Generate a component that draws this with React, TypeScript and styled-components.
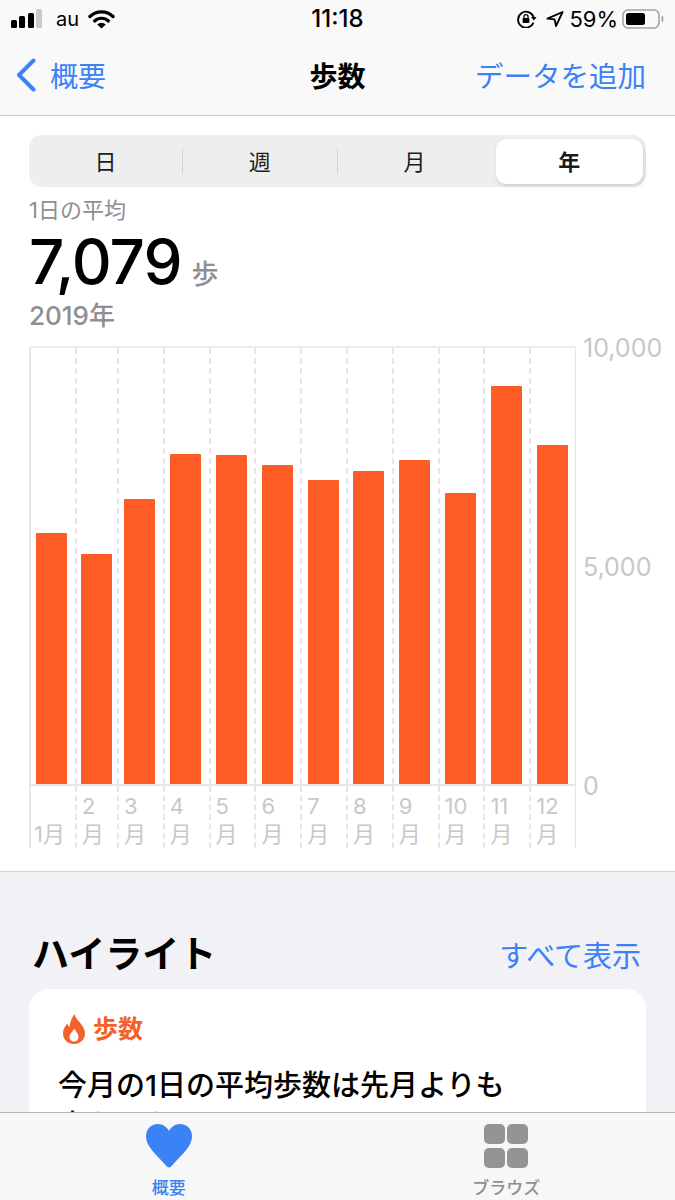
import * as React from "react";
import styled, { createGlobalStyle } from "styled-components";

const SANS = `"Inter", "Noto Sans CJK JP", "Liberation Sans", sans-serif`;
const BLUE = "#3b82f6";
const ORANGE = "#fe5c26";
const CHART_COLUMNS = "46px 42px repeat(10, 1fr)";

const GlobalStyle = createGlobalStyle`
	html, body {
		margin: 0;
		padding: 0;
		background: #fff;
	}
	* {
		box-sizing: border-box;
	}
`;

const Page = styled.div`
	width: 675px;
	height: 1200px;
	display: flex;
	flex-direction: column;
	overflow: hidden;
	font-family: ${SANS};
	color: #000;
`;

const Header = styled.header`
	flex: none;
	height: 116px;
	background: #f9f9f9;
	border-bottom: 1px solid #c6c6c8;
`;

const StatusBar = styled.div`
	height: 38px;
	display: grid;
	grid-template-columns: 1fr auto 1fr;
	align-items: center;
	padding: 0 11px;
`;

const StatusLeft = styled.div`
	display: flex;
	align-items: center;
`;

const StatusRight = styled.div`
	display: flex;
	align-items: center;
	justify-content: flex-end;
	gap: 9px;
`;

const Carrier = styled.span`
	font-size: 20px;
	margin: 0 9px 0 14px;
	line-height: 24px;
`;

const Clock = styled.span`
	font-size: 24px;
	font-weight: 500;
	line-height: 24px;
`;

const Percent = styled.span`
	font-size: 22px;
	line-height: 24px;
	margin: 0 -5px 0 -4px;
`;

const NavBar = styled.nav`
	height: 73px;
	display: grid;
	grid-template-columns: 1fr auto 1fr;
	align-items: center;
	padding: 0 16px;
`;

const BackLink = styled.div`
	display: flex;
	align-items: center;
	gap: 14px;
	font-size: 28px;
	color: ${BLUE};
`;

const NavTitle = styled.div`
	font-size: 28px;
	font-weight: 700;
`;

const NavAction = styled.div`
	font-size: 28.5px;
	color: ${BLUE};
	text-align: right;
	padding-right: 13px;
	white-space: nowrap;
`;

const Main = styled.main`
	flex: 1;
	min-height: 0;
	overflow: hidden;
	background: #f1f1f6;
`;

const ChartPanel = styled.section`
	background: #fff;
	border-bottom: 1px solid #d1d1d6;
	padding: 19px 0 23px 29px;
`;

const Segments = styled.div`
	height: 52px;
	width: 617px;
	border-radius: 13px;
	background: #eeeeef;
	display: grid;
	grid-template-columns: repeat(4, 1fr);
	align-items: center;
`;

const Segment = styled.div<{ $selected?: boolean; $divider?: boolean }>`
	height: ${(p) => (p.$selected ? "45px" : "26px")};
	margin: ${(p) => (p.$selected ? "0 3px 0 4px" : "0")};
	padding-bottom: 3px;
	display: flex;
	align-items: center;
	justify-content: center;
	font-size: 22px;
	font-weight: ${(p) => (p.$selected ? 700 : 400)};
	color: #1c1c1e;
	background: ${(p) => (p.$selected ? "#fff" : "transparent")};
	border-radius: ${(p) => (p.$selected ? "11px" : "0")};
	border-right: ${(p) => (p.$divider ? "1px solid #d4d4d6" : "none")};
	box-shadow: ${(p) => (p.$selected ? "1px 2px 4px rgba(0, 0, 0, 0.14)" : "none")};
`;

const Summary = styled.div`
	padding-top: 9px;
	margin-bottom: 14px;
`;

const SummaryLabel = styled.div`
	font-size: 22px;
	line-height: 28px;
	font-weight: 400;
	color: #8e8e93;
`;

const SummaryValue = styled.div`
	display: flex;
	align-items: baseline;
	height: 76px;
`;

const BigNumber = styled.span`
	font-size: 62px;
	line-height: 76px;
	font-weight: 500;
	letter-spacing: -1px;
`;

const Unit = styled.span`
	margin-left: 10px;
	font-size: 27px;
	line-height: 40px;
	font-weight: 500;
	color: #8e8e93;
`;

const SummaryYear = styled.div`
	font-size: 26px;
	line-height: 32px;
	font-weight: 500;
	color: #8e8e93;
`;

const ChartRow = styled.div`
	display: flex;
	align-items: flex-start;
	gap: 7px;
`;

const ChartBody = styled.div`
	flex: none;
	width: 547px;
`;

const Plot = styled.div`
	height: 440px;
	display: grid;
	grid-template-columns: ${CHART_COLUMNS};
	border-top: 2px solid #ececee;
	border-bottom: 2px solid #e5e5ea;
	border-right: 1px solid #e5e5ea;
`;

const PlotCell = styled.div<{ $first?: boolean }>`
	display: flex;
	align-items: flex-end;
	justify-content: center;
	padding-right: ${(p) => (p.$first ? "3px" : "2px")};
	border-left: 2px ${(p) => (p.$first ? "solid" : "dashed")} #e6e6e8;
`;

const Bar = styled.div`
	width: 31px;
	background: ${ORANGE};
	border-radius: 1px 1px 0 0;
`;

const MonthRow = styled.div`
	height: 62px;
	display: grid;
	grid-template-columns: ${CHART_COLUMNS};
	border-right: 1px solid #e5e5ea;
`;

const MonthCell = styled.div<{ $first?: boolean }>`
	display: flex;
	flex-direction: column;
	justify-content: flex-end;
	padding-left: ${(p) => (p.$first ? "3px" : "5px")};
	border-left: 2px ${(p) => (p.$first ? "solid" : "dashed")} #e6e6e8;
	font-size: 22px;
	line-height: 28px;
	color: #c7c7cc;
	white-space: nowrap;
`;

const Axis = styled.div`
	flex: none;
	height: 462px;
	margin-top: -10px;
	display: flex;
	flex-direction: column;
	justify-content: space-between;
	font-size: 25px;
	line-height: 24px;
	color: #c7c7cc;
`;

const Highlights = styled.section`
	padding: 58px 29px 0;
`;

const HighlightHead = styled.div`
	display: flex;
	align-items: center;
	justify-content: space-between;
	height: 44px;
	padding: 0 5px 0 3px;
	margin-bottom: 15px;
`;

const HighlightTitle = styled.h2`
	margin: 0;
	font-size: 37px;
	font-weight: 700;
`;

const SeeAll = styled.span`
	margin-top: 4px;
	font-size: 29px;
	color: ${BLUE};
`;

const Card = styled.article`
	background: #fff;
	border-radius: 20px;
	padding: 24px 29px 40px;
	height: 240px;
`;

const CardTag = styled.div`
	display: flex;
	align-items: center;
	gap: 8px;
	padding-left: 5px;
	font-size: 25px;
	font-weight: 700;
	color: #f2612c;
	line-height: 32px;
`;

const CardText = styled.p`
	margin: 21px 0 0;
	font-size: 29px;
	font-weight: 500;
	line-height: 40px;
`;

const TabBar = styled.footer`
	flex: none;
	height: 88px;
	display: grid;
	grid-template-columns: 1fr 1fr;
	background: #f7f7f7;
	border-top: 1px solid #b5b5b8;
`;

const Tab = styled.div<{ $active?: boolean }>`
	display: flex;
	flex-direction: column;
	align-items: center;
	padding-top: 11px;
	font-size: 17px;
	font-weight: 500;
	line-height: 22px;
	color: ${(p) => (p.$active ? BLUE : "#8e8e93")};
`;

const TabIcon = styled.div`
	height: 46px;
	margin-bottom: 7px;
`;

const BROWSE_TILES = [
	[0, 0],
	[23, 0],
	[0, 24],
	[23, 24],
];

const MONTHS = [
	{ value: 251 },
	{ value: 230 },
	{ value: 285 },
	{ value: 330 },
	{ value: 329 },
	{ value: 319 },
	{ value: 304 },
	{ value: 313 },
	{ value: 324 },
	{ value: 291 },
	{ value: 398 },
	{ value: 339 },
];

const SignalIcon = () => (
	<svg width="31" height="20" viewBox="0 0 31 20">
		<rect x="0" y="11" width="6" height="8" rx="1.5" fill="#000" />
		<rect x="8" y="7" width="6" height="12" rx="1.5" fill="#000" />
		<rect x="17" y="4" width="6" height="15" rx="1.5" fill="#000" />
		<rect x="25" y="0" width="6" height="19" rx="1.5" fill="#c9c9c9" />
	</svg>
);

const WifiIcon = () => (
	<svg width="27" height="19" viewBox="0 0 27 19">
		<path d="M2 6.5 A16.5 16.5 0 0 1 25 6.5" fill="none" stroke="#000" strokeWidth="3.4" strokeLinecap="round" />
		<path d="M6.6 11 A10 10 0 0 1 20.4 11" fill="none" stroke="#000" strokeWidth="3.2" strokeLinecap="round" />
		<path d="M13.5 18.6 L9.2 14.4 A6.2 6.2 0 0 1 17.8 14.4 Z" fill="#000" />
	</svg>
);

const RotationLockIcon = () => (
	<svg width="20" height="18" viewBox="0 0 20 18">
		<path d="M16.5 12.6 A8 8 0 1 1 16.6 7" fill="none" stroke="#000" strokeWidth="1.8" />
		<path d="M14 7 L19.6 7 L16.8 10.4 Z" fill="#000" />
		<rect x="5.6" y="8" width="6.8" height="5" rx="1" fill="#000" />
		<path d="M7 8.4 V6.6 A2 2 0 0 1 11 6.6 V8.4" fill="none" stroke="#000" strokeWidth="1.3" />
	</svg>
);

const LocationIcon = () => (
	<svg width="18" height="16" viewBox="0 0 18 16">
		<path d="M16.6 1 L1.4 7.6 L8.6 8.4 L10 15 Z" fill="none" stroke="#000" strokeWidth="1.8" strokeLinejoin="round" />
	</svg>
);

const BatteryIcon = () => (
	<svg width="42" height="20" viewBox="0 0 42 20">
		<rect x="1" y="1" width="36" height="18" rx="5" fill="none" stroke="#a3a3a3" strokeWidth="1.6" />
		<rect x="4" y="4" width="19" height="12" rx="2.5" fill="#000" />
		<rect x="39.5" y="7" width="1.8" height="6" rx="0.9" fill="#a3a3a3" />
	</svg>
);

const ChevronIcon = () => (
	<svg width="20" height="34" viewBox="0 0 20 34">
		<path d="M17.5 2.5 L3 17 L17.5 31.5" fill="none" stroke={BLUE} strokeWidth="4" strokeLinecap="round" strokeLinejoin="round" />
	</svg>
);

const FlameIcon = () => (
	<svg width="22" height="30" viewBox="0 0 22 30">
		<path
			fillRule="evenodd"
			fill="#f2612c"
			d="M11.500 0 C12 5.500 22 11 22 19.500 C22 25.600 17.200 30 11 30 C4.800 30 0 25.600 0 19.500 C0 15.500 2 12.300 4.200 9.800 C4.800 11.200 5.500 12.300 6.500 13 C7 8.500 8.800 3.800 11.500 0 Z M11 27.500 C13.800 27.500 15.500 25.500 15.500 23 C15.500 20 12.800 17.800 11.500 14.500 C9.500 17.500 6.500 20 6.500 23 C6.500 25.500 8.200 27.500 11 27.500 Z"
		/>
	</svg>
);

const HeartIcon = () => (
	<svg width="46" height="44" viewBox="0 0 46 44">
		<path
			fill={BLUE}
			d="M23 43.500 C21.800 43.500 20.800 42.700 19.500 41 C9 29.500 0 22 0 12.500 C0 5.200 5 0 11.800 0 C17 0 20.800 2.800 23 7 C25.200 2.800 29 0 34.200 0 C41 0 46 5.200 46 12.500 C46 22 37 29.500 26.500 41 C25.200 42.700 24.200 43.500 23 43.500 Z"
		/>
	</svg>
);

const BrowseIcon = () => (
	<svg width="44" height="44" viewBox="0 0 44 44">
		{BROWSE_TILES.map(([x, y]) => (
			<rect key={`${x}-${y}`} x={x} y={y} width="21" height="20" rx="5" fill="#949496" />
		))}
	</svg>
);

const MonthLabel = ({ index }: { index: number }) =>
	index === 0 ? (
		<span>1月</span>
	) : (
		<>
			<span>{index + 1}</span>
			<span>月</span>
		</>
	);

export default function App() {
	return (
		<Page>
			<GlobalStyle />
			<Header>
				<StatusBar>
					<StatusLeft>
						<SignalIcon />
						<Carrier>au</Carrier>
						<WifiIcon />
					</StatusLeft>
					<Clock>11:18</Clock>
					<StatusRight>
						<RotationLockIcon />
						<LocationIcon />
						<Percent>59%</Percent>
						<BatteryIcon />
					</StatusRight>
				</StatusBar>
				<NavBar>
					<BackLink>
						<ChevronIcon />
						概要
					</BackLink>
					<NavTitle>歩数</NavTitle>
					<NavAction>データを追加</NavAction>
				</NavBar>
			</Header>
			<Main>
				<ChartPanel>
					<Segments>
						<Segment $divider>日</Segment>
						<Segment $divider>週</Segment>
						<Segment>月</Segment>
						<Segment $selected>年</Segment>
					</Segments>
					<Summary>
						<SummaryLabel>1日の平均</SummaryLabel>
						<SummaryValue>
							<BigNumber>7,079</BigNumber>
							<Unit>歩</Unit>
						</SummaryValue>
						<SummaryYear>2019年</SummaryYear>
					</Summary>
					<ChartRow>
						<ChartBody>
							<Plot>
								{MONTHS.map((month, i) => (
									<PlotCell key={i} $first={i === 0}>
										<Bar style={{ height: month.value }} />
									</PlotCell>
								))}
							</Plot>
							<MonthRow>
								{MONTHS.map((_, i) => (
									<MonthCell key={i} $first={i === 0}>
										<MonthLabel index={i} />
									</MonthCell>
								))}
							</MonthRow>
						</ChartBody>
						<Axis>
							<span>10,000</span>
							<span>5,000</span>
							<span>0</span>
						</Axis>
					</ChartRow>
				</ChartPanel>
				<Highlights>
					<HighlightHead>
						<HighlightTitle>ハイライト</HighlightTitle>
						<SeeAll>すべて表示</SeeAll>
					</HighlightHead>
					<Card>
						<CardTag>
							<FlameIcon />
							歩数
						</CardTag>
						<CardText>
							今月の1日の平均歩数は先月よりも
							<br />
							少なくなっています。
						</CardText>
					</Card>
				</Highlights>
			</Main>
			<TabBar>
				<Tab $active>
					<TabIcon>
						<HeartIcon />
					</TabIcon>
					概要
				</Tab>
				<Tab>
					<TabIcon>
						<BrowseIcon />
					</TabIcon>
					ブラウズ
				</Tab>
			</TabBar>
		</Page>
	);
}
